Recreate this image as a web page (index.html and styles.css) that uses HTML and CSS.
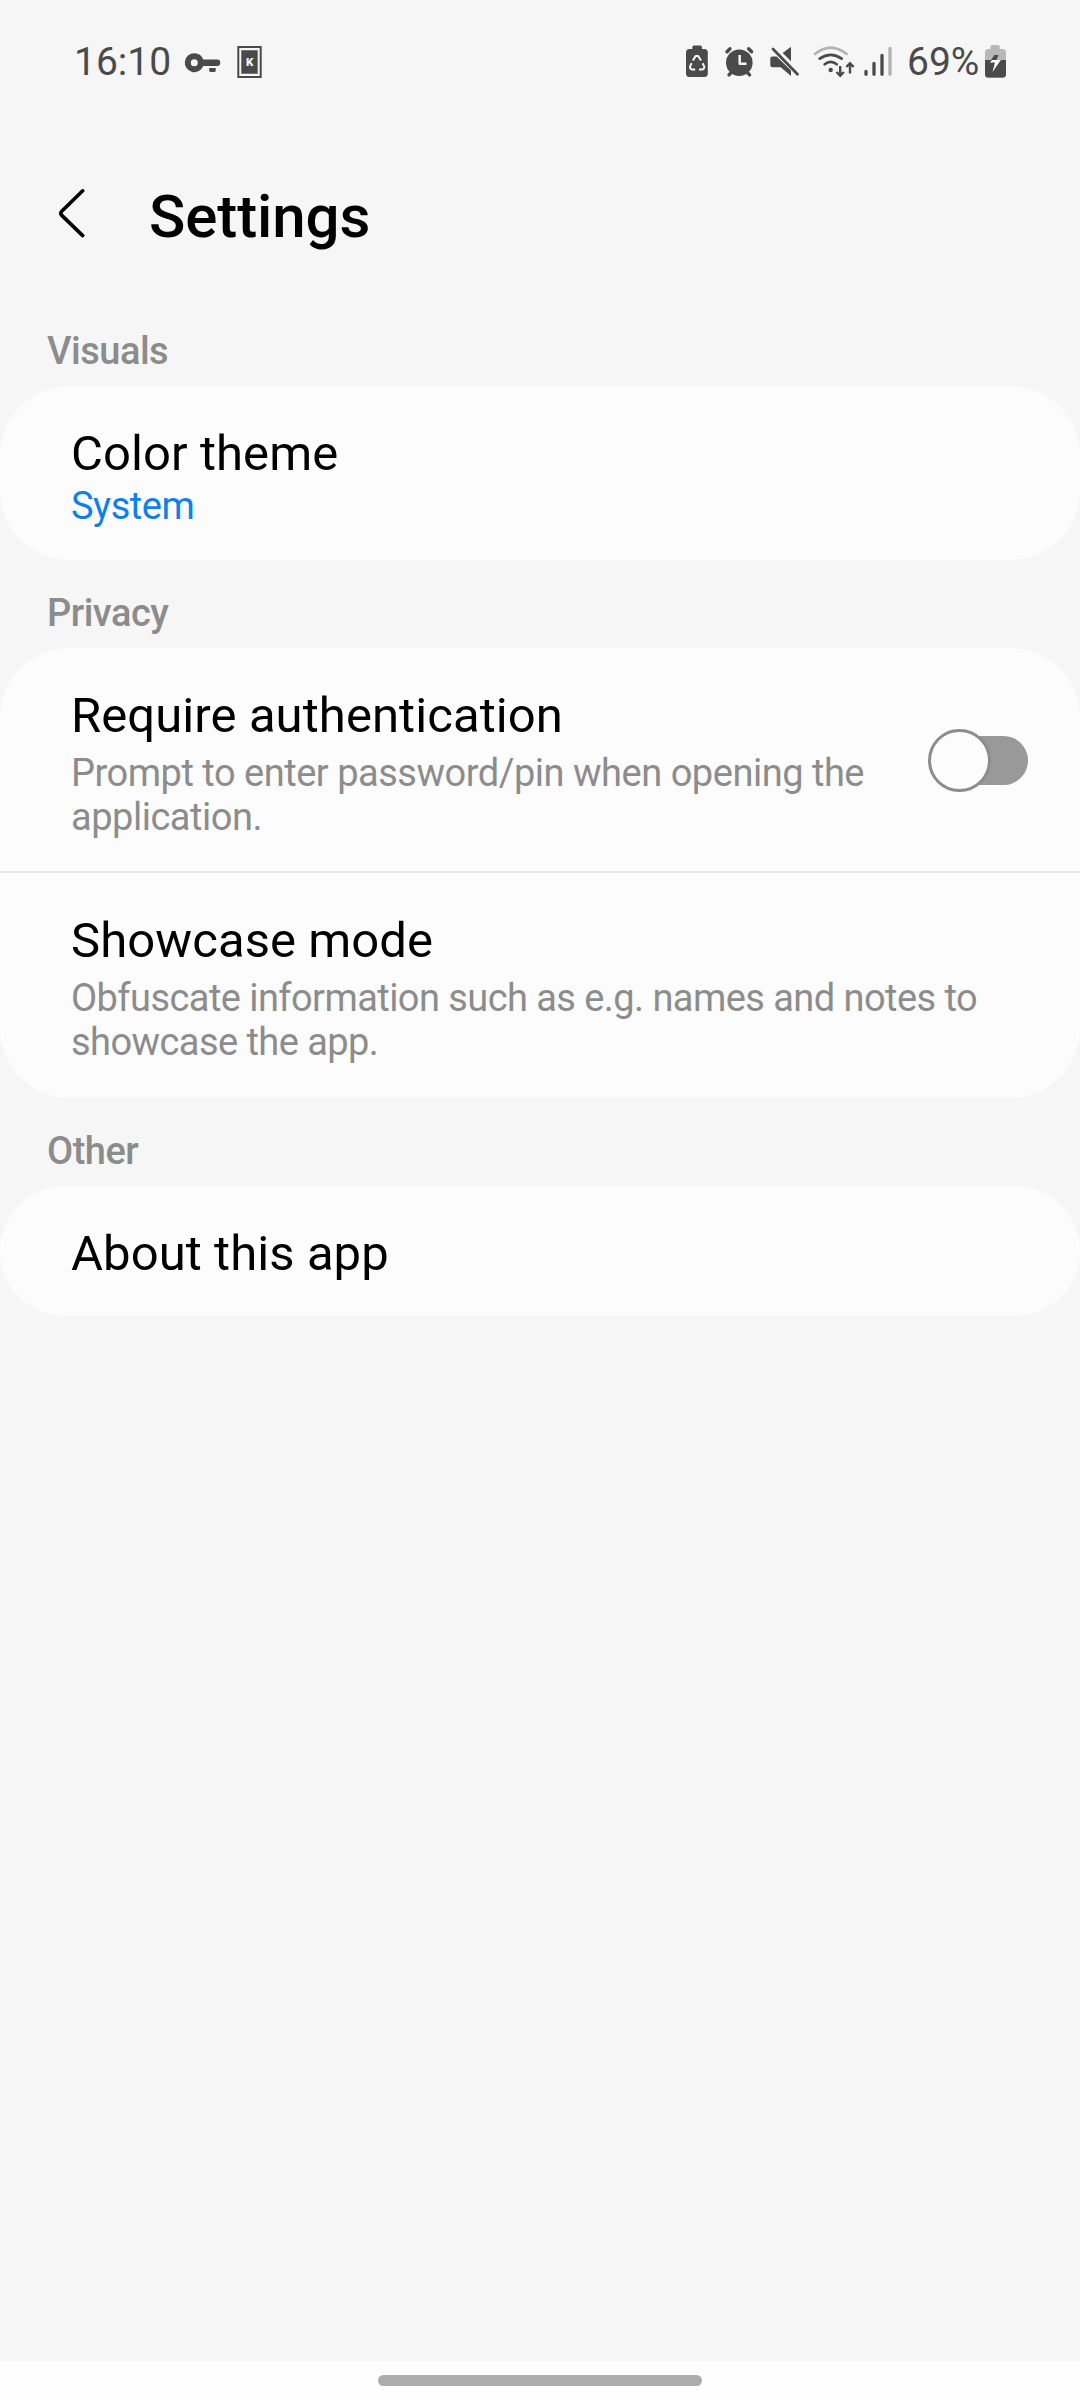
FILE: index.html
```
<!DOCTYPE html>
<html lang="en">
<head>
<meta charset="utf-8">
<title>Settings</title>
<link rel="stylesheet" href="styles.css">
</head>
<body>
<div class="screen">
  <header class="status">
    <span class="clock">16:10</span>
    <svg class="status-left" width="100" height="48" viewBox="174 38 100 48">
      <g fill="#4a4a4a">
        <path fill-rule="evenodd" d="M194.300 53.200a9.500 9.500 0 0 1 8.900 6.300H217a3.200 3.200 0 0 1 0 6.500H203.200a9.500 9.500 0 1 1-8.900-12.800zm0 6a3.500 3.500 0 1 0 0 7 3.500 3.500 0 0 0 0-7z"/>
        <path d="M209.200 68h6.500v2.500a1.600 1.600 0 0 1-1.600 1.600h-3.300a1.600 1.600 0 0 1-1.600-1.600z"/>
        <path fill-rule="evenodd" d="M237.300 46h24.400v32h-24.400zM239.300 48v28h20.400V48z"/>
        <path d="M241.300 50.300h16.400v23.400h-16.400z"/>
      </g>
      <text class="badge" x="249.800" y="66.200" text-anchor="middle">K</text>
    </svg>
    <svg class="status-right" width="216" height="48" viewBox="682 38 216 48">
      <g fill="#4a4a4a">
        <path d="M692.300 49v-1.800a1.600 1.600 0 0 1 1.600-1.600h6.500a1.600 1.600 0 0 1 1.600 1.600V49h2.300a3.500 3.500 0 0 1 3.500 3.500v21a3.500 3.500 0 0 1-3.500 3.500h-14.800a3.500 3.500 0 0 1-3.500-3.500v-21a3.500 3.500 0 0 1 3.500-3.500z"/>
        <circle cx="739.300" cy="62.700" r="13.300"/>
        <path d="M770.300 58.500a2 2 0 0 1 2-2h4.300L791 70.500V76l-10.300-8.700h-8.400a2 2 0 0 1-2-2zM791 46.700v14.500l-8.300-8.200z"/>
        <circle cx="830.700" cy="70" r="2.200"/>
      </g>
      <g fill="none" stroke="#f6f6f6" stroke-width="2" stroke-linejoin="round">
        <path d="M692.800 60.500L695.800 55.900h2.400L701 60.500M702.600 63.200l1.600 3.200q.4 2.800-2 3h-3.200M695.200 69.400h-3q-2.600-.2-2.100-3l1.500-3.200"/>
        <path d="M739.700 55v8.700h6.800" stroke-width="2.500"/>
      </g>
      <g fill="none" stroke="#4a4a4a" stroke-width="3.400" stroke-linecap="round">
        <path d="M727 51.800l3-3M751.600 51.800l-3-3M731.600 72.200l-2.600 2.700M747 72.200l2.600 2.700"/>
        <path d="M773 49l24.500 25.300" stroke-width="2.700"/>
        <path d="M819.700 58.700q11-7.600 22 0" stroke-width="2.700"/>
        <path d="M824.700 64.300q6-4.800 12 0" stroke-width="2.700"/>
      </g>
      <path d="M815 54q15.700-12.800 31.600 0" fill="none" stroke="#b3b3b3" stroke-width="2.600" stroke-linecap="round"/>
      <path d="M840.200 66v9M836.500 72l3.700 3.800 3.700-3.800M850 73.500v-9.500M846.300 67l3.700-3.800 3.700 3.800" fill="none" stroke="#4a4a4a" stroke-width="2.400"/>
      <g fill="none" stroke="#4a4a4a" stroke-width="3.300" stroke-linecap="round">
        <path d="M866 71.500v2.800M874 63.500v10.800M882 55.500v18.800"/>
        <path d="M890 48.500v25.800" stroke="#b3b3b3"/>
      </g>
    </svg>
    <span class="percent">69%</span>
    <svg class="battery" width="22" height="34" viewBox="984 45 22 34">
      <path d="M990.500 48v-1.500a1.500 1.500 0 0 1 1.500-1.500h6.300a1.500 1.500 0 0 1 1.500 1.500V49h2.700a3.500 3.500 0 0 1 3.500 3.500v22a3.500 3.500 0 0 1-3.500 3.500h-14a3.500 3.500 0 0 1-3.500-3.500v-22a3.500 3.500 0 0 1 3.500-3.500h2z" fill="#b8b8b8"/>
      <path d="M985 60h21v14a3.500 3.500 0 0 1-3.500 3.500h-14a3.500 3.500 0 0 1-3.500-3.500z" fill="#4a4a4a"/>
      <path d="M992 60l-2 2.500h5l-2.500 9.500 8-11.500 .3-.5z" fill="#fff"/>
      <path d="M994.500 55h4l-2 5h-5.500z" fill="#4a4a4a"/>
    </svg>
  </header>

  <div class="toolbar">
    <svg class="back" width="28" height="52" viewBox="58 188 28 52">
      <path d="M82.700 190.800L61.800 211.200q-2 2.100 0 4.200L82.700 235.600" fill="none" stroke="#000" stroke-width="3.600" stroke-linecap="round"/>
    </svg>
    <h1 class="title">Settings</h1>
  </div>

  <main>
    <h2 class="section">Visuals</h2>
    <div class="card">
      <div class="row">
        <div>
          <div class="name">Color theme</div>
          <div class="value">System</div>
        </div>
      </div>
    </div>
    <h2 class="section">Privacy</h2>
    <div class="card">
      <div class="row">
        <div class="text">
          <div class="name">Require authentication</div>
          <div class="summary">Prompt to enter password/pin when opening the<br>application.</div>
        </div>
        <div class="switch"><div class="thumb"></div></div>
      </div>
      <div class="row row-last">
        <div class="text">
          <div class="name">Showcase mode</div>
          <div class="summary">Obfuscate information such as e.g. names and notes to<br>showcase the app.</div>
        </div>
      </div>
    </div>
    <h2 class="section">Other</h2>
    <div class="card">
      <div class="row row-single">
        <div class="name">About this app</div>
      </div>
    </div>
  </main>

  <footer class="navbar"><div class="handle"></div></footer>
</div>
</body>
</html>
```
FILE: styles.css
```
* { box-sizing: border-box; }

body {
  margin: 0;
  background: #f6f6f6;
  font-family: Roboto, sans-serif;
  color: #000;
}

.screen {
  display: flex;
  flex-direction: column;
  width: 1080px;
  height: 2400px;
}

/* Status bar */
.status {
  display: flex;
  align-items: center;
  height: 124px;
  padding: 0 74px;
  color: #4a4a4a;
  font-size: 39px;
  line-height: 46px;
}
.clock { width: 100px; }
.badge {
  fill: #f6f6f6;
  font-size: 11.5px;
  font-weight: 900;
}
.status-right { margin-left: auto; }
.percent { width: 77px; margin-left: 9px; }

/* Title bar */
.toolbar {
  display: flex;
  align-items: center;
  height: 174px;
  padding: 12px 58px 0;
}
.back { margin-top: -6px; }
.title {
  margin: 0 0 0 63px;
  font-size: 60px;
  font-weight: 500;
  line-height: 70px;
  letter-spacing: -0.1px;
}

/* Preference list */
.section {
  margin: 0;
  padding: 31px 47px 13px;
  color: #8c8c8c;
  font-size: 38px;
  font-weight: 500;
  line-height: 44px;
  letter-spacing: -0.5px;
}
.card {
  background: #fcfcfc;
  border-radius: 70px;
}
.row {
  display: flex;
  align-items: center;
  justify-content: space-between;
  padding: 39px 52px 32px 71px;
}
.row-last { padding-bottom: 34px; }
.row-single { padding-bottom: 33px; }
.row + .row { border-top: 2px solid #e6e6e6; }
.name {
  font-size: 49px;
  line-height: 58px;
  letter-spacing: 0.08px;
}
.value {
  margin-top: 1px;
  color: #0f80ea;
  font-size: 38px;
  line-height: 44px;
  letter-spacing: -0.45px;
}
.summary {
  margin-top: 6px;
  color: #8c8c8c;
  font-size: 38px;
  line-height: 44px;
  letter-spacing: -0.48px;
  white-space: nowrap;
}
.row-last .summary { letter-spacing: -0.56px; }

.switch {
  display: flex;
  align-items: center;
  width: 96px;
  height: 49px;
  margin-top: -5px;
  border-radius: 25px;
  background: #999;
}
.thumb {
  flex: none;
  width: 63px;
  height: 63px;
  margin-left: -4px;
  border: 3px solid #8c8c8c;
  border-radius: 50%;
  background: #fcfcfc;
}

/* Gesture bar */
.navbar {
  display: flex;
  justify-content: center;
  height: 39px;
  margin-top: auto;
  padding-top: 14px;
  background: #fefefe;
}
.handle {
  width: 324px;
  height: 11px;
  border-radius: 6px;
  background: #adadad;
}
```
